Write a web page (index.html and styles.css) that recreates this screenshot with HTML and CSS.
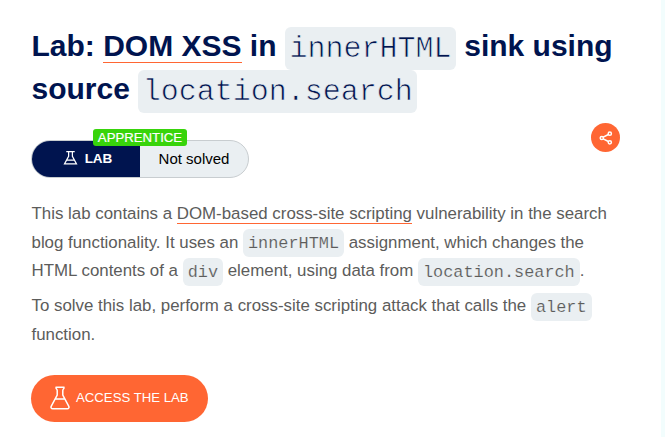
FILE: index.html
```html
<!DOCTYPE html>
<html lang="en">
<head>
<meta charset="utf-8">
<title>Lab: DOM XSS</title>
<link rel="stylesheet" href="styles.css">
</head>
<body>
<main class="page">
  <h1 class="title"><span class="line">Lab: <a class="link" href="#">DOM XSS</a> in <code>innerHTML</code> sink using</span> <span class="line">source <code>location.search</code></span></h1>
  <div class="meta">
    <div class="status">
      <div class="status-lab">
        <svg class="flask-small" viewBox="0 0 16 16"><path d="M3.5 1.2h9M6 1.2v5L1.6 14.3h12.8L10 6.2v-5M4.3 10.3h7.4"/></svg>
        <span>LAB</span>
      </div>
      <div class="status-state">Not solved</div>
      <span class="level">APPRENTICE</span>
    </div>
    <a class="share" href="#" aria-label="Share">
      <svg viewBox="0 0 14 14"><path d="M9.4 3.5 4.2 6.2M4.2 7.8l5.2 2.7"/><circle cx="10.8" cy="2.7" r="1.6"/><circle cx="2.8" cy="7" r="1.6"/><circle cx="10.8" cy="11.3" r="1.6"/></svg>
    </a>
  </div>
  <p class="text"><span class="line">This lab contains a <a class="link" href="#">DOM-based cross-site scripting</a> vulnerability in the search</span> <span class="line">blog functionality. It uses an <code>innerHTML</code> assignment, which changes the</span> <span class="line">HTML contents of a <code>div</code> element, using data from <code>location.search</code>.</span></p>
  <p class="text"><span class="line">To solve this lab, perform a cross-site scripting attack that calls the <code>alert</code></span> <span class="line">function.</span></p>
  <a class="button" href="#">
    <svg class="flask-large" viewBox="0 0 20 24"><path d="M5.5 1.2h9M5.8 1.5c.2 1.7 1.4 1.2 1.4 3v4.6L1.3 20.2c-.7 1.4-.1 2.6 1.4 2.6h14.6c1.5 0 2.1-1.2 1.4-2.6L12.8 9.1V4.5c0-1.8 1.2-1.3 1.4-3M5.3 13h9.4"/></svg>
    <span>ACCESS THE LAB</span>
  </a>
</main>
</body>
</html>
```
FILE: styles.css
```css
* { box-sizing: border-box; }
body {
  margin: 0;
  background: #f2fdfd;
  font-family: "Liberation Sans", Arial, sans-serif;
  color: #5c5c5b;
}
.page {
  width: 661px;
  height: 437px;
  padding: 24px 41px 0 31px;
  background: #fff;
  overflow: hidden;
}
.line { display: block; white-space: nowrap; }
.title {
  margin: 0 0 0 0.5px;
  font-size: 30px;
  line-height: 43px;
  color: #00144f;
}
.link {
  color: inherit;
  text-decoration: none;
  border-bottom: 1px solid #ff6633;
}
code {
  padding: 4.5px;
  border-radius: 6px;
  background: #eaeff2;
  font-family: "Liberation Mono", "Courier New", monospace;
  font-weight: 400;
  line-height: 0;
  -webkit-text-stroke: 0.7px #eaeff2;
}
.meta {
  display: flex;
  justify-content: space-between;
  height: 68px;
  margin-top: 13px;
}
.status {
  position: relative;
  display: flex;
  width: 218px;
  height: 38px;
  margin-top: 17px;
  border: 1px solid #c8cdd0;
  border-radius: 19px;
  background: #eaeff2;
}
.status-lab {
  display: flex;
  align-items: center;
  justify-content: center;
  gap: 7px;
  width: 108px;
  padding: 0 0 2px 3px;
  border-radius: 18px 0 0 18px;
  background: #00144f;
  color: #fff;
  font-size: 13.5px;
  font-weight: 700;
}
.status-state {
  flex: 1;
  text-align: center;
  font-size: 15px;
  line-height: 36px;
  color: #000;
}
.level {
  position: absolute;
  top: -12px;
  left: 61px;
  width: 94px;
  height: 17px;
  border-radius: 3px;
  background: #38d40b;
  color: #fff;
  font-size: 13.2px;
  line-height: 17px;
  text-align: center;
  -webkit-text-stroke: 0.2px #fff;
}
svg {
  fill: none;
  stroke: #fff;
  stroke-width: 1.3;
}
.flask-small { width: 15px; height: 16px; }
.share {
  display: flex;
  align-items: center;
  justify-content: center;
  width: 29px;
  height: 29px;
  border-radius: 50%;
  background: #ff6633;
}
.share svg { width: 14px; height: 14px; stroke-width: 1.5; }
.text {
  margin: 9px 0 0 0.5px;
  font-size: 16.88px;
  line-height: 28.5px;
}
.text + .text { margin-top: 6.5px; }
.text code {
  padding: 4.5px 5px;
  -webkit-text-stroke-width: 0.15px;
}
.button {
  display: flex;
  align-items: center;
  gap: 6px;
  width: 177px;
  height: 47px;
  margin-top: 26px;
  padding: 0 0 2px 19px;
  border-radius: 24px;
  background: #ff6633;
  color: #fff;
  font-size: 13.2px;
  text-decoration: none;
  white-space: nowrap;
}
.flask-large { width: 20px; height: 24px; stroke-width: 1.5; }
```
